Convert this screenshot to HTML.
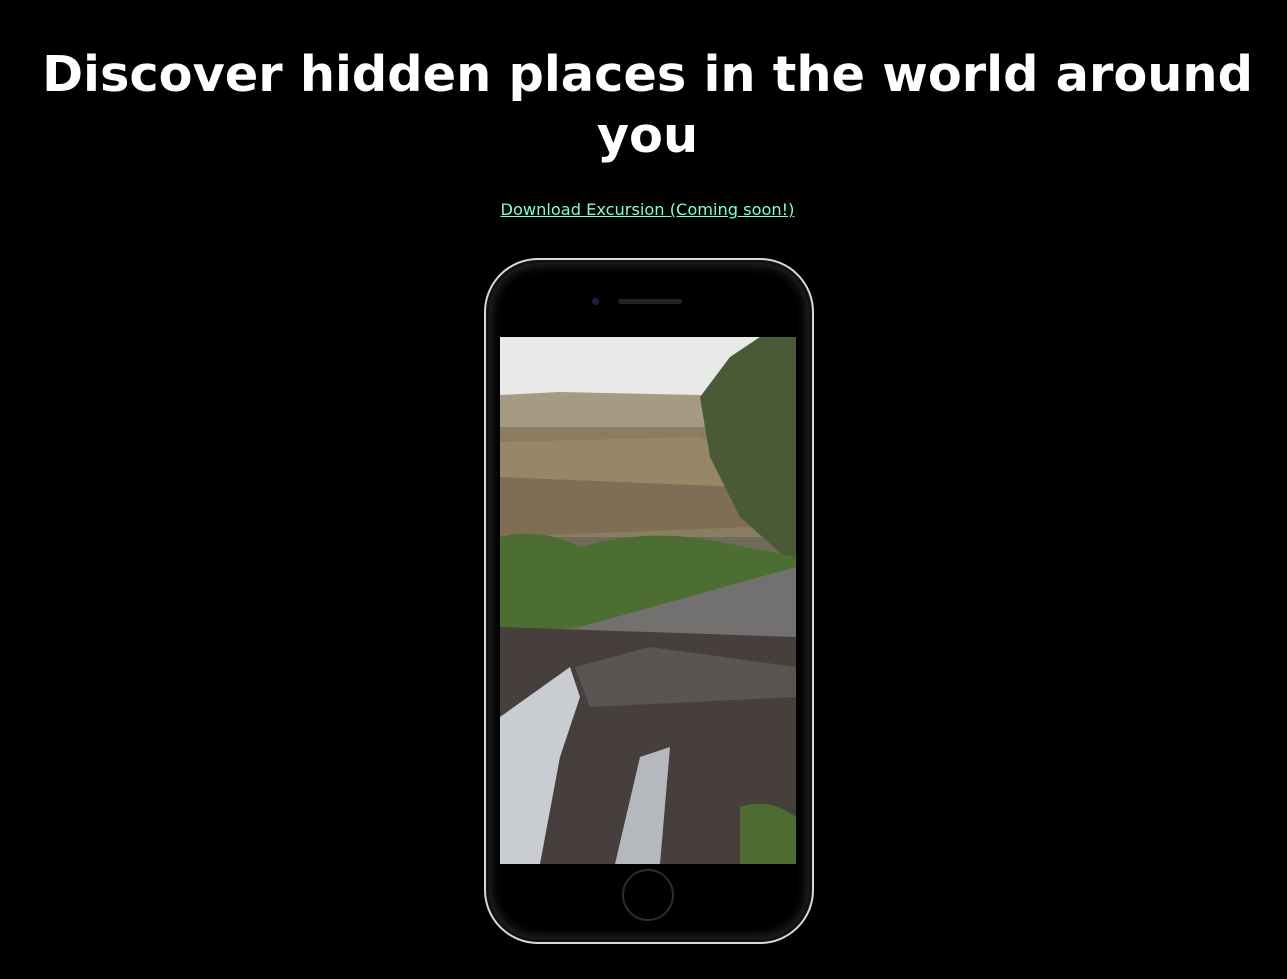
<!DOCTYPE html>
<html><head><meta charset="utf-8"><style>
html,body{margin:0;padding:0;background:#000;width:1287px;height:979px;overflow:hidden}
h1{margin:0;position:absolute;top:44px;left:0;width:1295px;text-align:center;color:#fff;font-family:"DejaVu Sans",Verdana,sans-serif;font-weight:bold;font-size:49.4px;line-height:61px}
a{position:absolute;top:200px;left:0;width:1295px;text-align:center;color:#7fffd4;font-family:"DejaVu Sans",Verdana,sans-serif;font-size:16.2px;text-decoration:underline}
.phone{position:absolute;left:484px;top:258px;width:330px;height:686px;border-radius:54px;border:2px solid #d8d8d8;box-sizing:border-box;background:#000;box-shadow:inset 0 0 0 3px #111,inset 0 0 10px 6px #262626}
</style></head><body>
<h1>Discover hidden places in the world around you</h1>
<a>Download Excursion (Coming soon!)</a>
<div class="phone"></div>
<div style="position:absolute;left:592px;top:298px;width:7px;height:7px;border-radius:50%;background:#1b1f3a"></div>
<div style="position:absolute;left:618px;top:299px;width:64px;height:5px;border-radius:3px;background:#222"></div>
<div style="position:absolute;left:622px;top:869px;width:48px;height:48px;border-radius:50%;border:2px solid #2e2e2e"></div>
<svg style="position:absolute;left:500px;top:337px" width="296" height="527" viewBox="0 0 296 527">
<rect width="296" height="527" fill="#6f6a5c"/>
<rect width="296" height="60" fill="#e9e9e7"/>
<path d="M0 58 L60 55 L200 58 L220 65 L296 70 L296 110 L0 110Z" fill="#a59a83"/>
<path d="M0 90 L296 90 L296 200 L0 200Z" fill="#8a7d62"/>
<path d="M0 105 L200 100 L260 140 L296 190 L0 190Z" fill="#978766"/>
<path d="M0 140 L240 150 L250 190 L0 200Z" fill="#7e6e55"/>
<path d="M200 60 L230 20 L260 0 L296 0 L296 230 L240 180 L210 120Z" fill="#4a5a36"/>
<path d="M0 200 Q40 190 80 210 Q150 190 220 205 L296 220 L296 260 L0 300Z" fill="#4c6e32"/>
<path d="M80 290 L296 230 L296 320 L80 320Z" fill="#727170"/>
<path d="M0 290 L296 300 L296 527 L0 527Z" fill="#463f3d"/>
<path d="M0 380 L70 330 L80 360 L60 420 L40 527 L0 527Z" fill="#c9ccd0"/>
<path d="M140 420 L170 410 L160 527 L115 527Z" fill="#b5b8bc"/>
<path d="M240 470 Q270 460 296 480 L296 527 L240 527Z" fill="#4e6b33"/>
<path d="M75 330 L150 310 L296 330 L296 360 L90 370Z" fill="#5a5452"/>
</svg>
</body></html>
